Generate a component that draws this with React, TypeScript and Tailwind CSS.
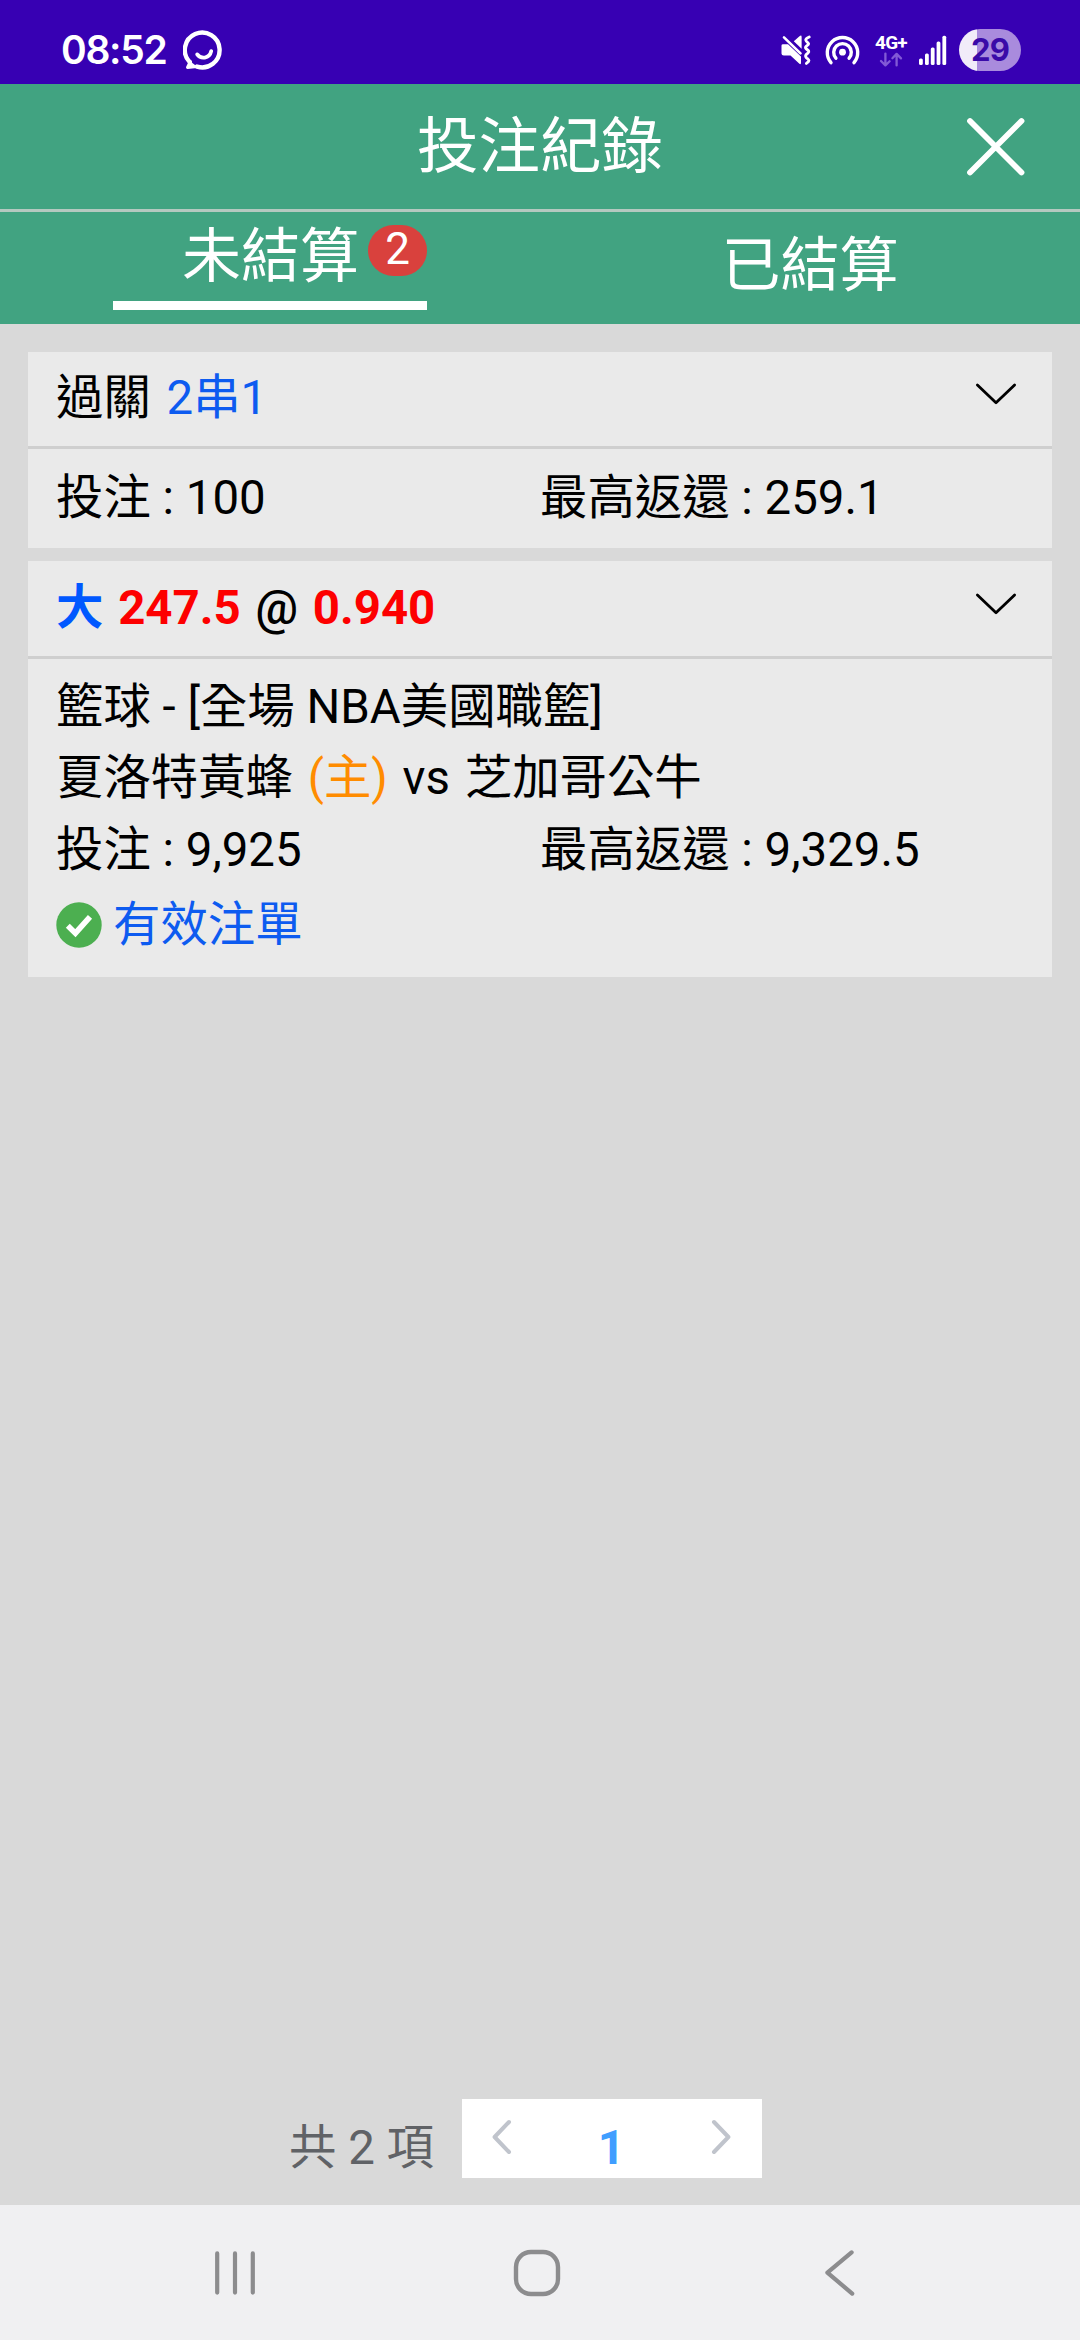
import { useState } from "react";

function SmileIcon() {
  return (
    <svg width="40" height="40" viewBox="0 0 40 40" fill="none" stroke="#fff" strokeWidth="4.4" strokeLinecap="round" strokeLinejoin="round">
      <path d="M6.8 32.2 A17.4 17.4 0 1 1 14 36.6" />
      <path d="M14 36.6 L4.5 37.4 L7.4 31.5" strokeWidth="3" fill="#fff" />
      <path d="M14.2 24.4 C17.5 29.2 26.5 29 28.2 21.2" strokeWidth="3.8" />
    </svg>
  );
}

function MuteIcon() {
  return (
    <svg width="31" height="32" viewBox="0 0 31 32" fill="none">
      <path d="M0.5 11.6 Q0.5 10.2 2 10.2 H7 L20 22.5 V29 Q20 30.8 18.4 29.8 L9.5 21.5 H2.8 Q0.5 21.5 0.5 19.5 Z" fill="#fff" />
      <path d="M12.8 7.2 L18.8 2 Q20.6 0.8 20.6 3 V14.8 Z" fill="#fff" />
      <path d="M3 3.4 L19.5 19.4" stroke="#fff" strokeWidth="2.6" strokeLinecap="round" />
      <path d="M28.2 3 C23 5.2 24.6 6.8 27 8.8 C29.4 11 23.6 12 24.6 14 C25.6 16 29.4 16.6 27 19 C24.6 21.2 23.6 21.8 25.6 24 C28 26 29.4 26.6 25.4 29.4" stroke="#fff" strokeWidth="2.9" strokeLinecap="round" />
    </svg>
  );
}

function HotspotIcon() {
  return (
    <svg width="35" height="32" viewBox="0 0 35 32" fill="none" stroke="#fff" strokeWidth="3.4" strokeLinecap="round">
      <path d="M6 28.6 A15.2 15.2 0 1 1 29 28.6" />
      <path d="M10.9 24.2 A8.8 8.8 0 1 1 24.1 24.2" />
      <circle cx="17.5" cy="18.2" r="3.4" fill="#fff" stroke="none" />
    </svg>
  );
}

function DataArrows() {
  return (
    <svg width="24" height="15" viewBox="0 0 24 15" fill="none" stroke="#8259d6" strokeWidth="2.3" strokeLinecap="round" strokeLinejoin="round">
      <path d="M6.4 1.6 V13 M2 9 L6.4 13.4 L10.6 9.2" />
      <path d="M17.6 13.4 V2.2 M13.4 6.2 L17.6 1.9 L22 6.4" />
    </svg>
  );
}

function SignalIcon() {
  return (
    <svg width="28" height="31" viewBox="0 0 28 31" fill="#fff">
      <rect x="0" y="23.5" width="3.8" height="6.5" rx="1.5" />
      <rect x="6" y="18.5" width="3.8" height="11.5" rx="1.5" />
      <rect x="11.8" y="12.5" width="3.8" height="17.5" rx="1.5" />
      <rect x="17.6" y="6.5" width="3.8" height="23.5" rx="1.5" />
      <rect x="23.4" y="0.8" width="3.8" height="29.2" rx="1.5" />
    </svg>
  );
}

function ChevronDown() {
  return (
    <svg className="mb-[10px]" width="42" height="22" viewBox="0 0 42 22" fill="none" stroke="#000" strokeWidth="2.8" strokeLinecap="round" strokeLinejoin="round">
      <path d="M2.4 2 L21 19.8 L39.6 2" />
    </svg>
  );
}

function CheckIcon() {
  return (
    <svg width="46" height="46" viewBox="0 0 46 46">
      <circle cx="23" cy="23" r="22.7" fill="#4caf50" />
      <path d="M11.8 23.8 L19.4 31.2 L34 14.8" fill="none" stroke="#fff" strokeWidth="5.6" />
    </svg>
  );
}

function StatusBar() {
  return (
    <div className="h-[84px] bg-[#3700b3] flex items-center justify-between pl-[61px] pr-[59px] pt-[16px] text-white font-[Inter,sans-serif]">
      <div className="flex items-center">
        <span className="w-[122px] text-[39px] leading-[40px] font-semibold tracking-[-1.3px]">08:52</span>
        <SmileIcon />
      </div>
      <div className="flex items-center">
        <MuteIcon />
        <span className="ml-[13px]"><HotspotIcon /></span>
        <div className="ml-[13px] pt-px w-[36px] flex flex-col items-center">
          <span className="text-[19px] leading-[18px] font-bold tracking-[-0.8px] font-[Roboto,sans-serif]">4G+</span>
          <DataArrows />
        </div>
        <span className="ml-[10px]"><SignalIcon /></span>
        <div className="ml-[12px] w-[62px] h-[42px] rounded-full bg-[linear-gradient(to_right,#f1ecf9_18px,#a98bdd_18px)] flex items-center justify-center">
          <span className="text-[31px] leading-[42px] font-bold text-[#3a0aa8] tracking-[-0.9px]">29</span>
        </div>
      </div>
    </div>
  );
}

export default function BetHistoryPage() {
  const [tab, setTab] = useState("open");

  return (
    <div className="w-[1080px] h-[2340px] flex flex-col bg-[#d9d9d9] text-black text-[47.4px] leading-[71.25px] whitespace-nowrap overflow-hidden font-[Roboto,'Noto_Sans_CJK_TC',sans-serif]">
      <StatusBar />

      {/* 標題 */}
      <header className="h-[125px] bg-[#41a381] text-white grid grid-cols-[1fr_auto_1fr] items-center">
        <h1 className="col-start-2 text-[61.5px] leading-[80px]">投注紀錄</h1>
        <button className="justify-self-end mr-[54px]">
          <svg width="60" height="60" viewBox="0 0 60 60" fill="none" stroke="#fff" strokeWidth="5.8" strokeLinecap="round">
            <path d="M4 4 L55.5 55.5 M55.5 4 L4 55.5" />
          </svg>
        </button>
      </header>

      {/* 分頁 */}
      <nav className="h-[115px] border-t-[3px] border-[#b4c9c0] bg-[#41a381] text-white text-[59px] leading-[80px] flex">
        <button onClick={() => setTab("open")} className="w-1/2 flex justify-center items-start">
          <span className="w-[314px] h-[98px] flex justify-end items-start border-b-[9px] border-white">
            <span className="pt-[5px]">未結算</span>
            <span className="ml-[9px] mt-[13px] w-[59px] h-[51px] rounded-full bg-[#d9413d] text-[44px] leading-[48px] text-center">2</span>
          </span>
        </button>
        <button onClick={() => setTab("closed")} className="w-1/2 h-[96px] pt-[12px]">
          已結算
        </button>
      </nav>

      {/* 注單 */}
      <main className="flex-1 px-[28px] pt-[28px]">
        <section className="bg-[#eaeaea]">
          <div className="h-[97px] px-[28px] flex items-center justify-between border-b-[3px] border-[#cfcfcf]">
            <p>
              過關 <span className="ml-[4px] text-[#0d5bf0]">2串1</span>
            </p>
            <span className="mr-[7px]"><ChevronDown /></span>
          </div>
          <div className="h-[99px] px-[28px] py-[14px] grid grid-cols-2">
            <p>投注 : 100</p>
            <p>最高返還 : 259.1</p>
          </div>
        </section>

        <section className="mt-[13px] bg-[#eaeaea]">
          <div className="h-[98px] px-[28px] flex items-center justify-between border-b-[3px] border-[#cfcfcf]">
            <p className="font-bold text-[#fd0000]">
              <span className="mr-[3px] text-[#0058ff]">大</span> 247.5 <span className="mx-[3px] font-medium text-black">@</span> 0.940
            </p>
            <span className="mr-[7px]"><ChevronDown /></span>
          </div>
          <div className="h-[318px] px-[28px] pt-[13px]">
            <p>籃球 - [全場 NBA美國職籃]</p>
            <p>
              夏洛特黃蜂 <span className="mx-[3px] text-[#ff8c00]">(主)</span> vs <span className="ml-[3px]">芝加哥公牛</span>
            </p>
            <div className="grid grid-cols-2">
              <p>投注 : 9,925</p>
              <p>最高返還 : 9,329.5</p>
            </div>
            <div className="h-[79px] flex items-center gap-[11px] text-[#0d5bf0]">
              <CheckIcon />
              有效注單
            </div>
          </div>
        </section>
      </main>

      {/* 頁碼 */}
      <footer className="h-[106px] pl-[289px] flex items-start">
        <span className="pt-[14px] text-[#606266]">共 2 項</span>
        <div className="ml-[28px] w-[300px] h-[79px] bg-white flex items-center justify-between pl-[30px] pr-[31px]">
          <svg className="mb-[3px]" width="20" height="36" viewBox="0 0 20 36" fill="none" stroke="#c0c4cc" strokeWidth="4" strokeLinecap="round" strokeLinejoin="round">
            <path d="M17 3 L2.6 18 L17 33" />
          </svg>
          <span className="mt-[21px] font-bold text-[#409eff]">1</span>
          <svg className="mb-[3px]" width="20" height="36" viewBox="0 0 20 36" fill="none" stroke="#c0c4cc" strokeWidth="4" strokeLinecap="round" strokeLinejoin="round">
            <path d="M3 3 L17.4 18 L3 33" />
          </svg>
        </div>
      </footer>

      {/* 系統導覽列 */}
      <div className="h-[135px] bg-[#f0f0f2] flex items-center pl-[214px]">
        <svg width="42" height="46" viewBox="0 0 42 46" stroke="#8c8c8e" strokeWidth="4.2" strokeLinecap="round">
          <path d="M3.2 3.4 V42.6 M21 3.4 V42.6 M38.8 3.4 V42.6" />
        </svg>
        <svg className="ml-[257px]" width="48" height="48" viewBox="0 0 48 48" fill="none" stroke="#8c8c8e" strokeWidth="4.4">
          <rect x="3" y="3" width="42" height="42" rx="15" />
        </svg>
        <svg className="ml-[263px]" width="32" height="48" viewBox="0 0 32 48" fill="none" stroke="#8c8c8e" strokeWidth="4.2" strokeLinecap="round" strokeLinejoin="round">
          <path d="M27.6 3.4 L3.4 23.6 L28.2 44.6" />
        </svg>
      </div>
    </div>
  );
}
